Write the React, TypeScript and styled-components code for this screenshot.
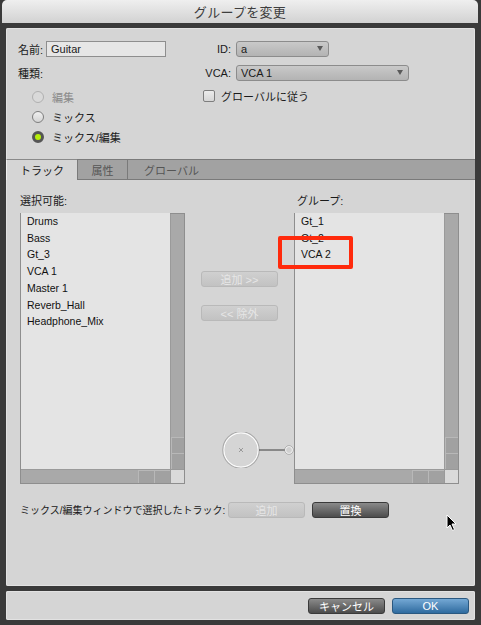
import styled, { createGlobalStyle } from 'styled-components';

const GlobalStyle = createGlobalStyle`
  html, body {
    margin: 0;
    padding: 0;
    background: #3a3a3a;
  }
  body {
    font-family: 'Liberation Sans', 'Noto Sans CJK JP', sans-serif;
    font-size: 11px;
    color: #1a1a1a;
  }
`;

const Window = styled.div`
  position: relative;
  width: 481px;
  height: 625px;
  background: #3a3a3a;
  display: flex;
  flex-direction: column;
  overflow: hidden;
`;

const TitleBar = styled.div`
  height: 23px;
  margin: 0 3px 0 2px;
  border-radius: 5px 5px 0 0;
  background: linear-gradient(#efefef, #d2d2d2);
  display: flex;
  align-items: center;
  justify-content: center;
  font-size: 13px;
  color: #3e3e3e;
  letter-spacing: 0.3px;
`;

const Panel = styled.div<{ $h: number }>`
  margin: 5px 6px 0 6px;
  height: ${(p) => p.$h}px;
  background: #d5d5d5;
  border-radius: 2px;
  box-shadow: inset 0 0 0 1px #e2e2e2;
  display: flex;
  flex-direction: column;
  box-sizing: border-box;
`;

const TopSection = styled.div`
  height: 131px;
  box-sizing: border-box;
  padding: 13px 0 0 12px;
  display: flex;
`;

const LeftCol = styled.div`
  width: 185px;
  display: flex;
  flex-direction: column;
`;

const RightCol = styled.div`
  display: flex;
  flex-direction: column;
`;

const Row = styled.div<{ $mt?: number }>`
  display: flex;
  align-items: center;
  height: 16px;
  margin-top: ${(p) => p.$mt ?? 0}px;
`;

const Label = styled.span<{ $w?: number; $right?: boolean }>`
  width: ${(p) => (p.$w ? `${p.$w}px` : 'auto')};
  text-align: ${(p) => (p.$right ? 'right' : 'left')};
  padding-right: ${(p) => (p.$right ? '5px' : '0')};
  white-space: nowrap;
`;

const TextInput = styled.div`
  width: 120px;
  height: 16px;
  box-sizing: border-box;
  border: 1px solid #8e8e8e;
  background: #e6e6e6;
  padding-left: 4px;
  line-height: 14px;
`;

const Select = styled.div<{ $w: number }>`
  position: relative;
  width: ${(p) => p.$w}px;
  height: 16px;
  box-sizing: border-box;
  border: 1px solid #8c8c8c;
  border-radius: 3px;
  background: linear-gradient(#c9c9c9, #b3b3b3);
  padding-left: 4px;
  line-height: 14px;
  &::after {
    content: '';
    position: absolute;
    right: 5px;
    top: 4px;
    border-left: 3.5px solid transparent;
    border-right: 3.5px solid transparent;
    border-top: 5px solid #5a5a5a;
  }
`;

const RadioList = styled.div`
  margin-top: 6px;
  padding-left: 14px;
  display: flex;
  flex-direction: column;
`;

const RadioRow = styled.div<{ $disabled?: boolean }>`
  display: flex;
  align-items: center;
  height: 20px;
  gap: 8px;
  color: ${(p) => (p.$disabled ? '#8a8a8a' : '#1a1a1a')};
`;

const Radio = styled.span<{ $checked?: boolean; $disabled?: boolean }>`
  width: 12px;
  height: 12px;
  box-sizing: border-box;
  border-radius: 50%;
  border: ${(p) => (p.$checked ? '3px solid #555' : `1px solid ${p.$disabled ? '#b0b0b0' : '#7e7e7e'}`)};
  background: ${(p) => (p.$checked ? '#b6ee0a' : p.$disabled ? '#d9d9d9' : 'linear-gradient(#f0f0f0, #d4d4d4)')};
`;

const CheckRow = styled.div`
  display: flex;
  align-items: center;
  gap: 6px;
  margin-top: 9px;
  height: 12px;
`;

const Checkbox = styled.span`
  width: 12px;
  height: 12px;
  box-sizing: border-box;
  border: 1px solid #7e7e7e;
  border-radius: 2px;
  background: linear-gradient(#ececec, #d6d6d6);
`;

const TabBar = styled.div`
  display: flex;
  height: 21px;
`;

const Tab = styled.div<{ $active?: boolean; $w?: number; $grow?: boolean }>`
  box-sizing: border-box;
  width: ${(p) => (p.$w ? `${p.$w}px` : 'auto')};
  flex: ${(p) => (p.$grow ? 1 : 'none')};
  display: flex;
  align-items: center;
  justify-content: ${(p) => (p.$grow ? 'flex-start' : 'center')};
  padding-left: ${(p) => (p.$grow ? '16px' : '0')};
  background: ${(p) => (p.$active ? '#d5d5d5' : '#a2a2a2')};
  color: ${(p) => (p.$active ? '#1a1a1a' : '#555')};
  border-top: 1px solid ${(p) => (p.$active ? '#8a8a8a' : '#7a7a7a')};
  border-left: 1px solid ${(p) => (p.$active ? '#efefef' : '#7a7a7a')};
  border-bottom: ${(p) => (p.$active ? 'none' : '1px solid #7a7a7a')};
  font-size: 11px;
`;

const TabBody = styled.div`
  flex: 1;
  padding: 15px 16px 0 14px;
  display: flex;
  flex-direction: column;
`;

const Lists = styled.div`
  display: grid;
  grid-template-columns: 165px 109px 165px;
  grid-template-rows: 13px 271px;
  row-gap: 5px;
`;

const ColLabel = styled.div<{ $pl?: number }>`
  line-height: 13px;
  padding-left: ${(p) => p.$pl ?? 0}px;
  white-space: nowrap;
`;

const ListBox = styled.div`
  position: relative;
  border: 1px solid #8e8e8e;
  display: flex;
  flex-direction: column;
`;

const ListMain = styled.div`
  flex: 1;
  display: flex;
`;

const Items = styled.div`
  flex: 1;
  background: #e4e4e4;
  padding: 0 0 0 6px;
  margin-top: -1px;
  font-size: 10.5px;
  line-height: 16.7px;
  color: #111;
`;

const VScroll = styled.div`
  width: 13px;
  background: #a9a9a9;
  border-left: 1px solid #9a9a9a;
  display: flex;
  flex-direction: column;
  justify-content: flex-end;
`;

const ScrollBtn = styled.div<{ $v?: boolean }>`
  width: ${(p) => (p.$v ? '13px' : '16px')};
  height: ${(p) => (p.$v ? '16px' : '13px')};
  box-sizing: border-box;
  background: #a1a1a1;
  border-top: 1px solid #b8b8b8;
  border-left: 1px solid #b8b8b8;
`;

const HScroll = styled.div`
  height: 13px;
  background: #a9a9a9;
  border-top: 1px solid #9a9a9a;
  display: flex;
  justify-content: flex-end;
`;

const Corner = styled.div`
  width: 14px;
  box-sizing: border-box;
  background: #dadada;
  border-left: 1px solid #9a9a9a;
`;

const Middle = styled.div`
  display: flex;
  flex-direction: column;
  align-items: center;
`;

const Btn = styled.div<{ $kind: 'disabled' | 'dark' | 'blue'; $mt?: number }>`
  width: 77px;
  height: 16px;
  margin-top: ${(p) => p.$mt ?? 0}px;
  box-sizing: border-box;
  border-radius: 3px;
  display: flex;
  align-items: center;
  justify-content: center;
  font-size: 11px;
  ${(p) =>
    p.$kind === 'disabled'
      ? `background: linear-gradient(#d0d0d0, #c2c2c2);
         border: 1px solid #b9b9b9;
         color: #e6e6e6;`
      : p.$kind === 'dark'
      ? `background: linear-gradient(#8a8a8a, #4c4c4c);
         border: 1px solid #3a3a3a;
         color: #fff;`
      : `background: linear-gradient(#74a8d4, #2f6b9f);
         border: 1px solid #2a5880;
         color: #fff;`}
`;

const Knob = styled.svg`
  margin-top: 111px;
  margin-left: 2px;
`;

const Highlight = styled.div`
  position: absolute;
  left: -17px;
  top: 22px;
  width: 75px;
  height: 33px;
  box-sizing: border-box;
  border: 4px solid #ff2a0c;
  border-radius: 2px;
`;

const BottomRow = styled.div`
  display: flex;
  align-items: center;
  height: 17px;
  margin-top: 17px;
  gap: 7px;
`;

const BottomLabel = styled.span`
  width: 201px;
  font-size: 10px;
  white-space: nowrap;
`;

const Footer = styled.div`
  flex: 1;
  display: flex;
  align-items: center;
  justify-content: flex-end;
  gap: 7px;
  padding-right: 6px;
`;

const Cursor = styled.svg`
  position: absolute;
  left: 446px;
  top: 514px;
`;

const available = ['Drums', 'Bass', 'Gt_3', 'VCA 1', 'Master 1', 'Reverb_Hall', 'Headphone_Mix'];
const grouped = ['Gt_1', 'Gt_2', 'VCA 2'];

const ScrollList = ({ items, children }: { items: string[]; children?: React.ReactNode }) => (
  <ListBox>
    <ListMain>
      <Items>
        {items.map((t) => (
          <div key={t}>{t}</div>
        ))}
      </Items>
      <VScroll>
        <ScrollBtn $v />
        <ScrollBtn $v />
      </VScroll>
    </ListMain>
    <HScroll>
      <ScrollBtn />
      <ScrollBtn />
      <Corner />
    </HScroll>
    {children}
  </ListBox>
);

export default function App() {
  return (
    <Window>
      <GlobalStyle />
      <TitleBar>グループを変更</TitleBar>
      <Panel $h={558}>
        <TopSection>
          <LeftCol>
            <Row>
              <Label $w={28}>名前:</Label>
              <TextInput>Guitar</TextInput>
            </Row>
            <Row $mt={8}>
              <Label>種類:</Label>
            </Row>
            <RadioList>
              <RadioRow $disabled>
                <Radio $disabled />
                編集
              </RadioRow>
              <RadioRow>
                <Radio />
                ミックス
              </RadioRow>
              <RadioRow>
                <Radio $checked />
                ミックス/編集
              </RadioRow>
            </RadioList>
          </LeftCol>
          <RightCol>
            <Row>
              <Label $w={28} $right>
                ID:
              </Label>
              <Select $w={93}>a</Select>
            </Row>
            <Row $mt={8}>
              <Label $w={28} $right>
                VCA:
              </Label>
              <Select $w={173}>VCA 1</Select>
            </Row>
            <CheckRow>
              <Checkbox />
              グローバルに従う
            </CheckRow>
          </RightCol>
        </TopSection>
        <TabBar>
          <Tab $active $w={71}>
            トラック
          </Tab>
          <Tab $w={50}>属性</Tab>
          <Tab $grow>グローバル</Tab>
        </TabBar>
        <TabBody>
          <Lists>
            <ColLabel>選択可能:</ColLabel>
            <div />
            <ColLabel $pl={3}>グループ:</ColLabel>
            <ScrollList items={available} />
            <Middle>
              <Btn $kind="disabled" $mt={58}>
                追加 &gt;&gt;
              </Btn>
              <Btn $kind="disabled" $mt={18}>
                &lt;&lt; 除外
              </Btn>
              <Knob width="109" height="36" viewBox="0 0 109 36">
                <circle cx="55" cy="18" r="17.5" fill="none" stroke="#a8a8a8" strokeWidth="2.5" />
                <circle cx="55" cy="18" r="17" fill="none" stroke="#fafafa" strokeWidth="1.4" />
                <path d="M53 16 L57 20 M57 16 L53 20" stroke="#9a9a9a" strokeWidth="1" />
                <line x1="73" y1="18" x2="100" y2="18" stroke="#3c3c3c" strokeWidth="1" />
                <circle cx="103" cy="18" r="3.5" fill="#d0d0d0" stroke="#fafafa" strokeWidth="1.2" />
                <circle cx="103" cy="18" r="4.3" fill="none" stroke="#8c8c8c" strokeWidth="0.6" />
              </Knob>
            </Middle>
            <ScrollList items={grouped}>
              <Highlight />
            </ScrollList>
          </Lists>
          <BottomRow>
            <BottomLabel>ミックス/編集ウィンドウで選択したトラック:</BottomLabel>
            <Btn $kind="disabled">追加</Btn>
            <Btn $kind="dark">置換</Btn>
          </BottomRow>
        </TabBody>
      </Panel>
      <Panel $h={29}>
        <Footer>
          <Btn $kind="dark">キャンセル</Btn>
          <Btn $kind="blue">OK</Btn>
        </Footer>
      </Panel>
      <Cursor width="12" height="18" viewBox="0 0 12 18">
        <path d="M1 1 L1 14 L4 11 L6.5 16.5 L8.5 15.5 L6 10 L10 10 Z" fill="#000" stroke="#fff" strokeWidth="1" />
      </Cursor>
    </Window>
  );
}
